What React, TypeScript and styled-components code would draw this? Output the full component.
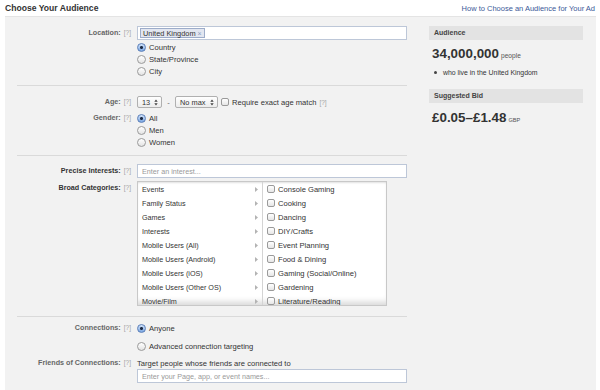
import styled, { createGlobalStyle } from "styled-components";

const GlobalStyle = createGlobalStyle`
  html, body {
    margin: 0;
    padding: 0;
    background: #fff;
  }
  body {
    width: 600px;
    height: 390px;
    overflow: hidden;
    font-family: "Liberation Sans", Arial, sans-serif;
    color: #333;
  }
  * {
    box-sizing: border-box;
  }
`;

const categories = [
  "Events",
  "Family Status",
  "Games",
  "Interests",
  "Mobile Users (All)",
  "Mobile Users (Android)",
  "Mobile Users (iOS)",
  "Mobile Users (Other OS)",
  "Movie/Film",
];

const subCategories = [
  "Console Gaming",
  "Cooking",
  "Dancing",
  "DIY/Crafts",
  "Event Planning",
  "Food & Dining",
  "Gaming (Social/Online)",
  "Gardening",
  "Literature/Reading",
];

const Header = styled.div`
  height: 16px;
  display: flex;
  align-items: center;
  justify-content: space-between;
  padding: 0 5px;
`;

const Title = styled.div`
  font-size: 8.6px;
  font-weight: bold;
  color: #333;
`;

const HelpLink = styled.a`
  font-size: 7.5px;
  color: #3b5998;
  text-decoration: none;
`;

const Panel = styled.div`
  margin: 0 4px 0 5px;
  height: 374px;
  background: #f2f2f2;
  border-top: 1px solid #e4e4e4;
  display: flex;
  padding-left: 12px;
`;

const Form = styled.div`
  width: 390px;
`;

const Section = styled.div<{ $top: number; $bottom: number; $last?: boolean }>`
  padding-top: ${(p) => p.$top}px;
  padding-bottom: ${(p) => p.$bottom}px;
  border-bottom: ${(p) => (p.$last ? "none" : "1px solid #dadada")};
`;

const Row = styled.div<{ $gap?: number }>`
  display: grid;
  grid-template-columns: 114px 270px;
  column-gap: 6px;
  align-items: start;
  margin-top: ${(p) => p.$gap || 0}px;
`;

const Label = styled.div<{ $h: number; $strong?: boolean }>`
  text-align: right;
  font-size: 7.2px;
  font-weight: bold;
  line-height: ${(p) => p.$h}px;
  color: ${(p) => (p.$strong ? "#333" : "#666")};
  white-space: nowrap;
`;

const Help = styled.span`
  font-weight: normal;
  font-size: 6.5px;
  color: #a3a3a3;
  margin-left: 3px;
`;

const TextBox = styled.div`
  height: 14px;
  width: 270px;
  background: #fff;
  border: 1px solid #bdc7d8;
  display: flex;
  align-items: center;
  padding: 0 2px;
`;

const Field = styled.input`
  display: block;
  height: 14px;
  width: 270px;
  margin: 0;
  background: #fff;
  border: 1px solid #bdc7d8;
  padding: 0 4px;
  font-family: inherit;
  font-size: 7.2px;
  color: #333;
  outline: none;

  &::placeholder {
    color: #999;
  }
`;

const Token = styled.span`
  height: 10px;
  display: inline-flex;
  align-items: center;
  gap: 2px;
  padding: 0 2px;
  background: #e2e6f0;
  border: 1px solid #9dacc9;
  font-size: 7.4px;
  color: #333;
`;

const TokenX = styled.span`
  color: #8b9cc0;
  font-size: 7px;
`;

const Choice = styled.div<{ $h?: number; $gap?: number }>`
  height: ${(p) => p.$h || 12}px;
  margin-top: ${(p) => p.$gap || 0}px;
  display: flex;
  align-items: center;
  gap: 3px;
  font-size: 7.6px;
  color: #333;
  white-space: nowrap;
`;

const Radio = styled.span<{ $on?: boolean }>`
  width: 9px;
  height: 9px;
  flex: none;
  border-radius: 50%;
  border: 1px solid ${(p) => (p.$on ? "#5b7fb8" : "#9a9a9a")};
  background: ${(p) =>
    p.$on
      ? "radial-gradient(circle, #1c2a44 0 1.3px, transparent 1.6px), linear-gradient(#d2e3fa, #7aa6e2)"
      : "linear-gradient(#fff, #e3e3e3)"};
`;

const Check = styled.span<{ $side?: number }>`
  width: 8px;
  height: 8px;
  flex: none;
  margin: 0 ${(p) => p.$side || 0}px;
  border-radius: 2px;
  border: 1px solid #9a9a9a;
  background: linear-gradient(#fff, #e6e6e6);
`;

const Controls = styled.div`
  height: 12px;
  display: flex;
  align-items: center;
  font-size: 7.6px;
  color: #333;
  white-space: nowrap;
`;

const Select = styled.span<{ $w: number }>`
  width: ${(p) => p.$w}px;
  height: 12px;
  display: flex;
  align-items: center;
  justify-content: space-between;
  padding: 0 3px 0 4px;
  border: 1px solid #b0b0b0;
  border-radius: 2px;
  background: linear-gradient(#fff, #ececec);
  font-size: 7.4px;
`;

const Dash = styled.span`
  width: 13px;
  text-align: center;
  color: #666;
`;

const CategoryBox = styled.div`
  margin-top: 3px;
  width: 250px;
  height: 125px;
  overflow: hidden;
  display: grid;
  grid-template-columns: 125px 1fr;
  background: #fff;
  border: 1px solid #c8c8c8;
  box-shadow: inset 0 -7px 6px -4px rgba(0, 0, 0, 0.16),
    inset 0 2px 2px -1px rgba(0, 0, 0, 0.12);
`;

const CategoryList = styled.div`
  border-right: 1px solid #d4d4d4;
  padding-left: 4px;
`;

const CategoryItem = styled.div`
  height: 14px;
  display: flex;
  align-items: center;
  justify-content: space-between;
  padding-right: 4px;
  font-size: 7.2px;
  color: #333;
`;

const SubList = styled.div`
  padding-left: 4px;
`;

const Side = styled.div`
  margin-left: 22px;
  width: 154px;
  padding-top: 9px;
`;

const SideHead = styled.div<{ $gap?: number }>`
  height: 14px;
  line-height: 14px;
  margin-top: ${(p) => p.$gap || 0}px;
  padding-left: 5px;
  background: #e3e3e3;
  font-size: 7px;
  font-weight: bold;
  color: #444;
`;

const BigStat = styled.div<{ $gap: number }>`
  height: 20px;
  margin-top: ${(p) => p.$gap}px;
  padding-left: 3px;
  display: flex;
  align-items: baseline;
  gap: 2px;
  font-size: 13.4px;
  line-height: 20px;
  font-weight: bold;
  color: #333;
`;

const Unit = styled.span<{ $size: number }>`
  font-size: ${(p) => p.$size}px;
  font-weight: normal;
  color: #555;
`;

const Bullet = styled.div`
  height: 12px;
  margin-top: 2px;
  display: flex;
  align-items: center;
  gap: 6px;
  padding-left: 5px;
  font-size: 6.9px;
  color: #333;
`;

const Dot = styled.span`
  width: 3px;
  height: 3px;
  border-radius: 50%;
  background: #444;
`;

function Arrows() {
  return (
    <svg width="4" height="7" viewBox="0 0 4 7">
      <path d="M2 0.5 L3.7 2.8 H0.3 Z M2 6.5 L3.7 4.2 H0.3 Z" fill="#444" />
    </svg>
  );
}

function Caret() {
  return (
    <svg width="3" height="5" viewBox="0 0 3 5">
      <path d="M0 0 L3 2.5 L0 5 Z" fill="#b3b3b3" />
    </svg>
  );
}

function HelpMark() {
  return <Help>[?]</Help>;
}

export default function App() {
  return (
    <>
      <GlobalStyle />
      <Header>
        <Title>Choose Your Audience</Title>
        <HelpLink href="#">How to Choose an Audience for Your Ad</HelpLink>
      </Header>
      <Panel>
        <Form>
          <Section $top={9} $bottom={8}>
            <Row>
              <Label $h={14}>
                Location:<HelpMark />
              </Label>
              <div>
                <TextBox>
                  <Token>
                    United Kingdom<TokenX>×</TokenX>
                  </Token>
                </TextBox>
                <Choice $gap={1}>
                  <Radio $on />
                  Country
                </Choice>
                <Choice>
                  <Radio />
                  State/Province
                </Choice>
                <Choice>
                  <Radio />
                  City
                </Choice>
              </div>
            </Row>
          </Section>

          <Section $top={10} $bottom={7}>
            <Row>
              <Label $h={12}>
                Age:<HelpMark />
              </Label>
              <Controls>
                <Select $w={25}>
                  13
                  <Arrows />
                </Select>
                <Dash>-</Dash>
                <Select $w={43}>
                  No max
                  <Arrows />
                </Select>
                <Check $side={3} />
                Require exact age match
                <HelpMark />
              </Controls>
            </Row>
            <Row $gap={4}>
              <Label $h={12}>
                Gender:<HelpMark />
              </Label>
              <div>
                <Choice>
                  <Radio $on />
                  All
                </Choice>
                <Choice>
                  <Radio />
                  Men
                </Choice>
                <Choice>
                  <Radio />
                  Women
                </Choice>
              </div>
            </Row>
          </Section>

          <Section $top={8} $bottom={10}>
            <Row>
              <Label $h={14} $strong>
                Precise Interests:<HelpMark />
              </Label>
              <Field placeholder="Enter an interest..." />
            </Row>
            <Row>
              <Label $h={20} $strong>
                Broad Categories:<HelpMark />
              </Label>
              <CategoryBox>
                <CategoryList>
                  {categories.map((c) => (
                    <CategoryItem key={c}>
                      {c}
                      <Caret />
                    </CategoryItem>
                  ))}
                </CategoryList>
                <SubList>
                  {subCategories.map((s) => (
                    <Choice key={s} $h={14}>
                      <Check />
                      {s}
                    </Choice>
                  ))}
                </SubList>
              </CategoryBox>
            </Row>
          </Section>

          <Section $top={5} $bottom={0} $last>
            <Row>
              <Label $h={12}>
                Connections:<HelpMark />
              </Label>
              <div>
                <Choice>
                  <Radio $on />
                  Anyone
                </Choice>
                <Choice $gap={6}>
                  <Radio />
                  Advanced connection targeting
                </Choice>
              </div>
            </Row>
            <Row $gap={5}>
              <Label $h={12}>
                Friends of Connections:<HelpMark />
              </Label>
              <div>
                <Choice>Target people whose friends are connected to</Choice>
                <Field placeholder="Enter your Page, app, or event names..." />
              </div>
            </Row>
          </Section>
        </Form>

        <Side>
          <SideHead>Audience</SideHead>
          <BigStat $gap={4}>
            34,000,000<Unit $size={6.6}>people</Unit>
          </BigStat>
          <Bullet>
            <Dot />
            who live in the United Kingdom
          </Bullet>
          <SideHead $gap={11}>Suggested Bid</SideHead>
          <BigStat $gap={5}>
            £0.05–£1.48<Unit $size={5.6}>GBP</Unit>
          </BigStat>
        </Side>
      </Panel>
    </>
  );
}
